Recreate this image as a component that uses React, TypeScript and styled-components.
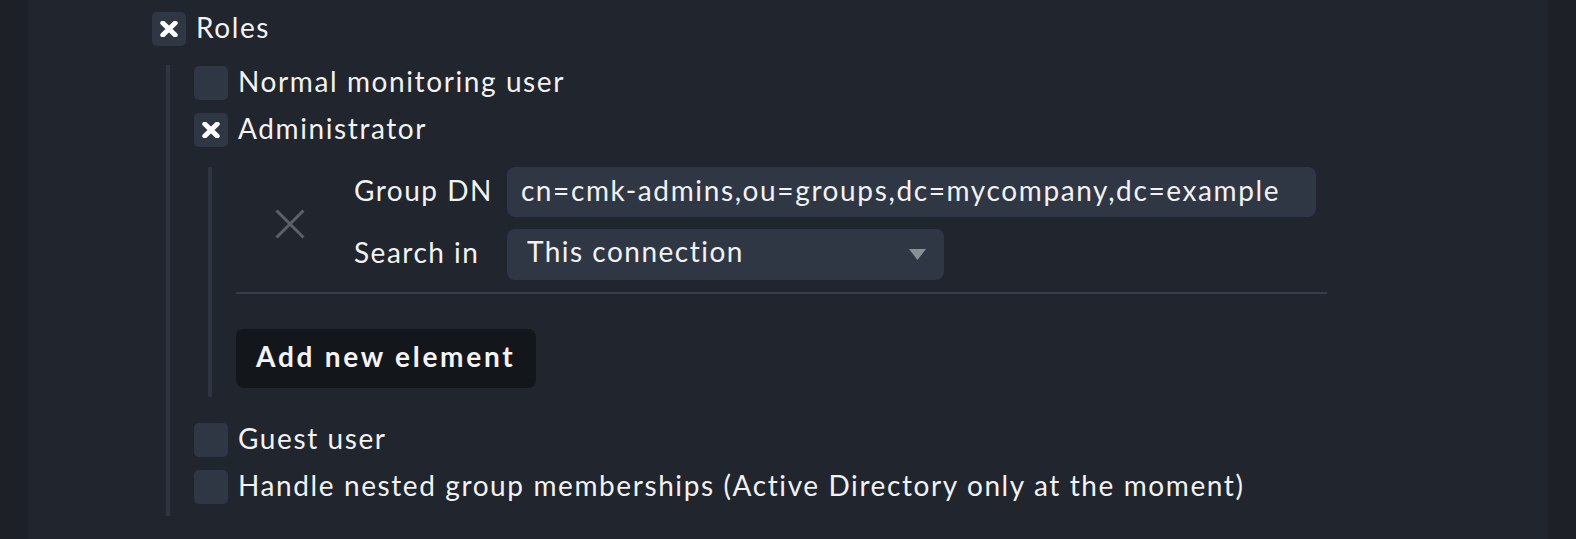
import React from 'react';
import styled, { createGlobalStyle } from 'styled-components';

const Global = createGlobalStyle`
  html, body { margin: 0; padding: 0; background: #21252c; }
  body { font-family: Lato, "Noto Sans", sans-serif; color: #f2f2f2; }
  * { box-sizing: border-box; }
`;

const Page = styled.div`
  display: flex;
  min-height: 539px;
  height: 539px;
  overflow: hidden;
`;

const SideStrip = styled.div`
  width: 28px;
  flex: none;
  background: #1d2026;
`;

const Main = styled.div`
  flex: 1;
  background: #21252d;
  padding: 12px 0 0 124px;
`;

const CheckRow = styled.label`
  display: flex;
  align-items: center;
  gap: 10px;
  height: 34px;
  font-size: 28px;
  letter-spacing: 1.6px;
  white-space: nowrap;
`;

const RowText = styled.span`
  line-height: 1;
  padding-bottom: 5px;
`;

const Box = styled.span`
  width: 34px;
  height: 34px;
  flex: none;
  border-radius: 5px;
  background: #2f3744;
  display: flex;
  align-items: center;
  justify-content: center;
`;

const NestedList = styled.div`
  margin: 19px 0 0 14px;
  border-left: 4px solid #2e3540;
  padding: 1px 0 12px 24px;
  display: flex;
  flex-direction: column;
  gap: 13px;
`;

const InnerBlock = styled.div`
  margin: 7px 0 13px 14px;
  border-left: 4px solid #2e3540;
  padding: 0 0 9px 24px;
  width: 1119px;
  display: flex;
  flex-direction: column;
`;

const ElementRow = styled.div`
  display: flex;
  align-items: center;
`;

const RemoveCell = styled.div`
  width: 108px;
  flex: none;
  display: flex;
  align-items: center;
  justify-content: center;
`;

const Fields = styled.div`
  margin-left: 10px;
  display: grid;
  grid-template-columns: auto auto;
  column-gap: 14px;
  row-gap: 12px;
  align-items: center;
  justify-items: start;
`;

const FieldLabel = styled.span`
  font-size: 28px;
  line-height: 1;
  padding-bottom: 5px;
  letter-spacing: 1.5px;
  white-space: nowrap;
`;

const TextInput = styled.input`
  width: 809px;
  height: 50px;
  border: none;
  outline: none;
  border-radius: 8px;
  background: #2f3744;
  color: #f2f2f2;
  font-family: Lato, "Noto Sans", sans-serif;
  font-size: 28px;
  letter-spacing: 1.62px;
  padding: 0 14px 5px;
`;

const SelectBox = styled.div`
  width: 437px;
  height: 51px;
  border-radius: 8px;
  background: #2f3744;
  display: flex;
  align-items: center;
  justify-content: space-between;
  padding: 0 18px 0 20px;
  font-size: 28px;
  letter-spacing: 1.5px;
`;

const SelectText = styled.span`
  line-height: 1;
  padding-bottom: 7px;
`;

const Separator = styled.div`
  height: 2px;
  margin-top: 12px;
  background: #363d48;
`;

const AddButton = styled.button`
  align-self: flex-start;
  margin-top: 35px;
  height: 59px;
  padding: 0 20px 6px;
  border: none;
  border-radius: 8px;
  background: #13171c;
  color: #f4f4f4;
  font-family: Lato, "Noto Sans", sans-serif;
  font-weight: 700;
  font-size: 28px;
  letter-spacing: 2.75px;
`;

const CheckMark = () => (
  <svg width="18" height="16" viewBox="0 0 18 16">
    <path d="M2.8 2 L15.2 14 M15.2 2 L2.8 14" stroke="#ffffff" strokeWidth="5" strokeLinecap="round" />
  </svg>
);

const RemoveIcon = () => (
  <svg width="30" height="30" viewBox="0 0 30 30">
    <path d="M1.5 1.5 L28.5 28.5 M28.5 1.5 L1.5 28.5" stroke="#5c6168" strokeWidth="3" />
  </svg>
);

const Triangle = () => (
  <svg width="17" height="11" viewBox="0 0 17 11">
    <path d="M0 0 L17 0 L8.5 11 Z" fill="#8b9097" />
  </svg>
);

const Check: React.FC<{ checked?: boolean; label: string }> = ({ checked, label }) => (
  <CheckRow>
    <Box>{checked && <CheckMark />}</Box>
    <RowText>{label}</RowText>
  </CheckRow>
);

export default function App() {
  return (
    <>
      <Global />
      <Page>
        <SideStrip />
        <Main>
          <Check checked label="Roles" />
          <NestedList>
            <Check label="Normal monitoring user" />
            <Check checked label="Administrator" />
            <InnerBlock>
              <ElementRow>
                <RemoveCell>
                  <RemoveIcon />
                </RemoveCell>
                <Fields>
                  <FieldLabel>Group DN</FieldLabel>
                  <TextInput readOnly value="cn=cmk-admins,ou=groups,dc=mycompany,dc=example" />
                  <FieldLabel>Search in</FieldLabel>
                  <SelectBox>
                    <SelectText>This connection</SelectText>
                    <Triangle />
                  </SelectBox>
                </Fields>
              </ElementRow>
              <Separator />
              <AddButton>Add new element</AddButton>
            </InnerBlock>
            <Check label="Guest user" />
            <Check label="Handle nested group memberships (Active Directory only at the moment)" />
          </NestedList>
        </Main>
        <SideStrip />
      </Page>
    </>
  );
}
